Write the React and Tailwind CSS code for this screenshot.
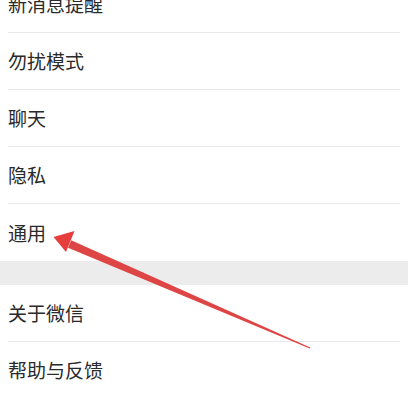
const groups = [
  ['新消息提醒', '勿扰模式', '聊天', '隐私', '通用'],
  ['关于微信', '帮助与反馈'],
];

const Row = ({ label, last }) => (
  <div className="pl-2 bg-white">
    <div
      className={`h-[57px] mr-2 flex items-center pt-[1px] text-[19px] text-[#2a2a2a] ${
        last ? 'h-[56px]' : 'border-b border-[#e8e8e8]'
      }`}
    >
      {label}
    </div>
  </div>
);

const Arrow = () => (
  <svg className="absolute inset-0 pointer-events-none" width="408" height="396" viewBox="0 0 408 396">
    <polygon points="68,247.8 71.2,240.2 310.3,347.6 309.7,348.6" fill="#de4545" />
    <polygon points="53.5,237 74.5,231 66,252" fill="#e63d3d" />
  </svg>
);

export default function App() {
  return (
    <div
      className="relative w-[408px] h-[396px] overflow-hidden bg-white"
      style={{ fontFamily: '"Noto Sans CJK SC", "Noto Sans", sans-serif' }}
    >
      <div className="-mt-[24px]">
        {groups[0].map((l, i) => (
          <Row key={l} label={l} last={i === groups[0].length - 1} />
        ))}
        <div className="h-[24px] bg-[#ececec]" />
        {groups[1].map((l) => (
          <Row key={l} label={l} />
        ))}
      </div>
      <Arrow />
    </div>
  );
}
